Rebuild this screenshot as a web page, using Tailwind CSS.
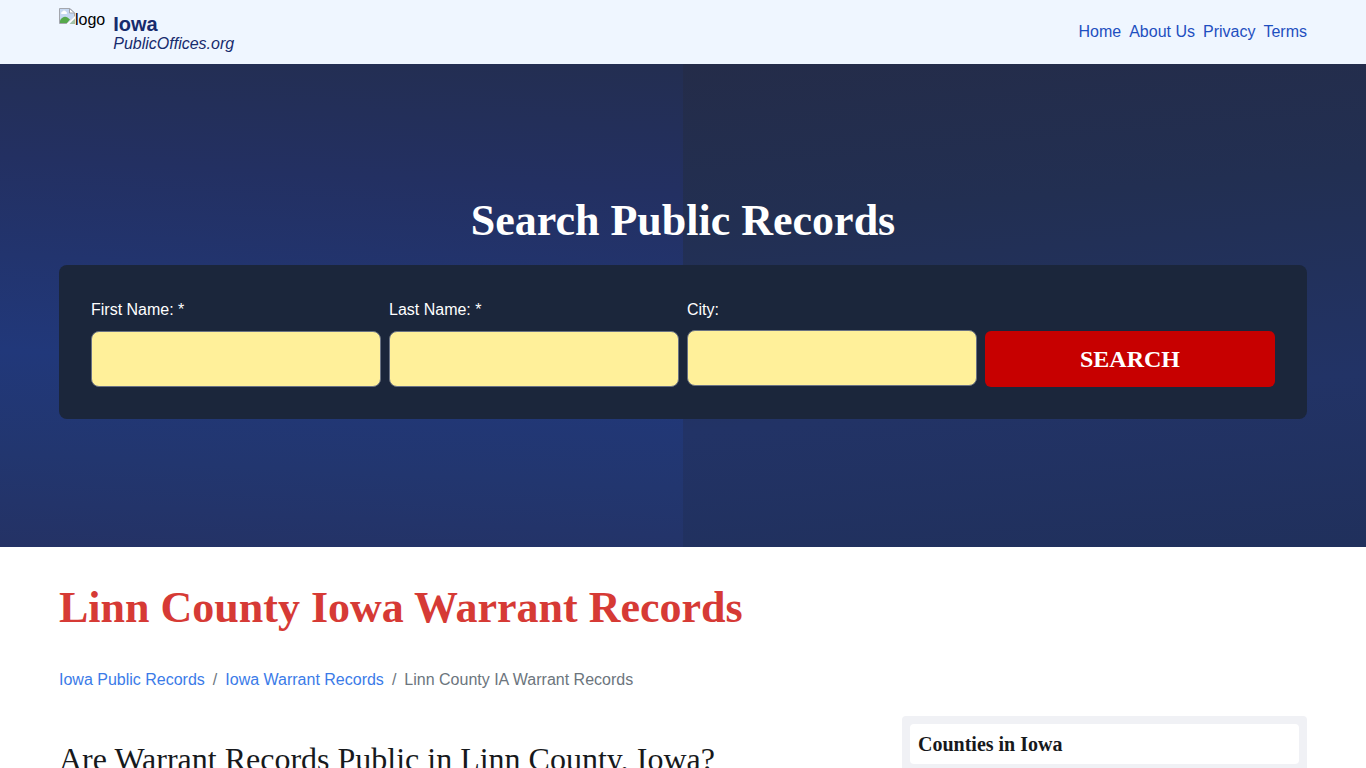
<!DOCTYPE html>
<html lang="en">
<head>
<meta charset="utf-8">
<meta name="viewport" content="width=device-width, initial-scale=1">
<title>Linn County Iowa Warrant Records</title>
<script src="https://cdn.jsdelivr.net/npm/@tailwindcss/browser@4"></script>
</head>
<body class="h-screen overflow-hidden bg-white font-['Liberation_Sans',Arial,sans-serif] text-base text-black">
<header class="bg-[#eff6ff]">
  <div class="mx-auto flex h-16 max-w-7xl items-center justify-between px-4">
    <a href="#" class="flex h-12 gap-2">
      <span class="flex items-start">
        <svg class="size-4" viewBox="0 0 16 16" aria-hidden="true">
          <path d="M.5.5H11L15.500 5v4L8 15.500H.5z" fill="#c6d8f2" stroke="#a3a6ad"/>
          <path d="M1 15v-2.500C3 9 6 8 8.500 9.500L11 11.500 8 15z" fill="#55a94b"/>
          <path d="M2.500 6a1.300 1.300 0 0 1 .8-2.200 2 2 0 0 1 3.700 0A1.300 1.300 0 0 1 7.500 6z" fill="#fff"/>
          <path d="M7.500 16 16 8v2l-6.500 6z" fill="#fff"/>
          <path d="M10.500 16 16 10.500V16z" fill="#a3c3a8"/>
          <path d="M10.500.5V5h5z" fill="#fff" stroke="#a3a6ad"/>
        </svg>
        <span>logo</span>
      </span>
      <span class="flex flex-col pt-1 text-[#172b6d]">
        <span class="text-xl leading-6 font-bold">Iowa</span>
        <span class="leading-4 italic">PublicOffices.org</span>
      </span>
    </a>
    <nav class="flex gap-2 text-[#1e4fc0]">
      <a href="#">Home</a><a href="#">About Us</a><a href="#">Privacy</a><a href="#">Terms</a>
    </nav>
  </div>
</header>
<section class="relative py-32">
  <div class="absolute inset-0 grid grid-cols-2">
    <div class="bg-[linear-gradient(183deg,#232e51,#233062_25%,#21387a_62%,#22366f_82%,#243265)]"></div>
    <div class="bg-[linear-gradient(175deg,#242c49,#222f52_30%,#223366_68%,#20305c)]"></div>
  </div>
  <div class="relative mx-auto max-w-7xl px-4">
    <h1 class="pb-4 text-center font-['Liberation_Serif',serif] text-[44px] leading-[57px] font-bold text-white">Search Public Records</h1>
    <form class="grid grid-cols-4 gap-2 rounded-lg bg-[#1b263b] p-8 text-white">
      <label class="flex flex-col gap-[9px] pt-px"><span>First Name: *</span><input type="text" class="h-14 w-full rounded-lg border border-gray-500 bg-[#fff09a] px-3 text-black"></label>
      <label class="flex flex-col gap-[9px] pt-px"><span>Last Name: *</span><input type="text" class="h-14 w-full rounded-lg border border-gray-500 bg-[#fff09a] px-3 text-black"></label>
      <label class="flex flex-col gap-2 pt-px"><span>City:</span><input type="text" class="h-14 w-full rounded-lg border border-gray-500 bg-[#fff09a] px-3 text-black"></label>
      <button type="button" class="h-14 self-end rounded-md bg-[#c70000] font-['Liberation_Serif',serif] text-2xl font-bold">SEARCH</button>
    </form>
  </div>
</section>
<main class="mx-auto max-w-7xl px-4">
  <h2 class="pt-8 font-['Liberation_Serif',serif] text-[44px] leading-[57px] font-bold text-[#d63a35]">Linn County Iowa Warrant Records</h2>
  <nav aria-label="Breadcrumb" class="flex gap-2 pt-8 text-[#6c757d]">
    <a href="#" class="text-[#3b7be8]">Iowa Public Records</a><span>/</span><a href="#" class="text-[#3b7be8]">Iowa Warrant Records</a><span>/</span><span>Linn County IA Warrant Records</span>
  </nav>
  <div class="flex items-start justify-between gap-8 pt-6">
    <h3 class="pt-6 font-['Liberation_Serif',serif] text-[32px] leading-[38px] text-[#17191c]">Are Warrant Records Public in Linn County, Iowa?</h3>
    <aside class="w-[405px] shrink-0 rounded bg-[#f0f1f5] p-2"><h4 class="rounded bg-white p-2 font-['Liberation_Serif',serif] text-xl leading-6 font-bold text-[#17191c]">Counties in Iowa</h4></aside>
  </div>
</main>
</body>
</html>
